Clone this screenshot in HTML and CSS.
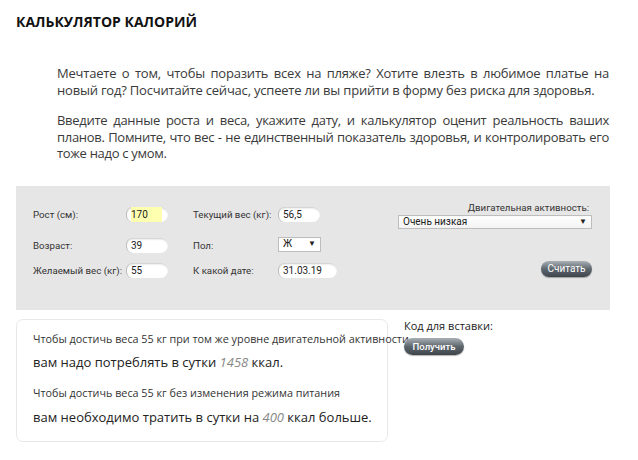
FILE: index.html
```html
<!DOCTYPE html>
<html lang="ru">
<head>
<meta charset="utf-8">
<link rel="stylesheet" href="styles.css">
</head>
<body>
<h1 class="title">КАЛЬКУЛЯТОР КАЛОРИЙ</h1>
<div class="intro">
  <p>Мечтаете о том, чтобы поразить всех на пляже? Хотите влезть в любимое платье на новый год? Посчитайте сейчас, успеете ли вы прийти в форму без риска для здоровья.</p>
  <p class="tight">Введите данные роста и веса, укажите дату, и калькулятор оценит реальность ваших планов. Помните, что вес - не единственный показатель здоровья, и контролировать его тоже надо с умом.</p>
</div>
<div class="panel">
  <div class="fields">
    <span class="lbl">Рост (см):</span>
    <span class="inp"><span class="hl">170</span></span>
    <span class="lbl">Текущий вес (кг):</span>
    <span class="inp">56,5</span>
    <span class="lbl">Возраст:</span>
    <span class="inp">39</span>
    <span class="lbl">Пол:</span>
    <span class="sel small"><span>Ж</span><span class="arr">▼</span></span>
    <span class="lbl">Желаемый вес (кг):</span>
    <span class="inp">55</span>
    <span class="lbl">К какой дате:</span>
    <span class="inp wide">31.03.19</span>
  </div>
  <div class="side">
    <div class="lbl side-lbl">Двигательная активность:</div>
    <span class="sel big"><span>Очень низкая</span><span class="arr">▼</span></span>
    <span class="btn calc">Считать</span>
  </div>
</div>
<div class="bottom">
  <div class="result">
    <div class="group">
      <p class="small-t">Чтобы достичь веса 55 кг при том же уровне двигательной активности</p>
      <p class="big-t">вам надо потреблять в сутки <em>1458</em> ккал.</p>
    </div>
    <div class="group">
      <p class="small-t">Чтобы достичь веса 55 кг без изменения режима питания</p>
      <p class="big-t">вам необходимо тратить в сутки на <em>400</em> ккал больше.</p>
    </div>
  </div>
  <div class="embed">
    <div class="embed-lbl">Код для вставки:</div>
    <span class="btn get">Получить</span>
  </div>
</div>
</body>
</html>
```
FILE: styles.css
```css
html, body { margin: 0; padding: 0; background: #fff; }
body {
  padding: 0 16px;
  font-family: "Open Sans", "DejaVu Sans", sans-serif;
  color: #333;
}
.title {
  margin: 0;
  padding-top: 12px;
  font-size: 14px;
  line-height: 20px;
  font-weight: 700;
  color: #111;
}
.intro {
  padding: 0 13px 0 41px;
  margin-top: 33px;
  font-size: 13px;
  letter-spacing: -0.2px;
  line-height: 16.5px;
  color: #3a3a3a;
  text-align: justify;
}
.intro p { margin: 0 0 14px; }
.intro p.tight { letter-spacing: -0.3px; }
.panel {
  margin-top: 24px;
  width: 594px;
  height: 124px;
  box-sizing: border-box;
  background: #e6e6e6;
  padding: 21px 18px 0 17px;
  display: flex;
  font-family: Roboto, "Liberation Sans", sans-serif;
}
.fields {
  display: grid;
  grid-template-columns: 93px 67px 85px auto;
  grid-template-rows: 31px 25px 15px;
  align-items: start;
}
.lbl { font-size: 9.7px; line-height: 15px; color: #333; }
.inp {
  display: block;
  width: 42px;
  height: 15px;
  box-sizing: border-box;
  padding: 0 0 0 4px;
  background: #fff;
  border-radius: 7px 8px 8px 7px;
  border-left: 1px solid #bbb;
  box-shadow: inset 0 2px 2px -1px #c8c8c8;
  font-size: 10px;
  line-height: 15px;
  color: #222;
}
.inp.wide { width: 59px; }
.hl { display: inline-block; background: #ffffb0; width: 31px; }
.sel {
  display: flex;
  justify-content: space-between;
  align-items: center;
  box-sizing: border-box;
  background: #fff;
  border: 1px solid #bdbdbd;
  box-shadow: inset 0 1px 0 #fafafa;
  font-size: 10px;
  line-height: 12px;
  color: #222;
  padding: 0 4px;
}
.sel .arr { font-size: 8px; color: #222; }
.sel.small { width: 43px; height: 15px; margin-top: -1px; }
.sel.big { width: 194px; height: 14px; background: linear-gradient(#fff, #f3f3f3); }
.side {
  margin-left: auto;
  margin-top: -6px;
  width: 194px;
  display: flex;
  flex-direction: column;
  align-items: flex-end;
}
.side-lbl { line-height: 14px; margin-right: 3px; }
.btn {
  display: inline-block;
  box-sizing: border-box;
  border-radius: 9px;
  background: linear-gradient(#a9b0b6, #5f676e 50%, #3d444a);
  color: #fff;
  text-align: center;
  font-family: Roboto, "Open Sans", sans-serif;
  box-shadow: 0 1px 1px rgba(0,0,0,0.3);
}
.calc {
  margin-top: 32px;
  width: 51px;
  height: 16px;
  line-height: 16px;
  font-size: 10px;
}
.bottom {
  display: flex;
  margin-top: 9px;
}
.result {
  width: 372px;
  height: 123px;
  box-sizing: border-box;
  border: 1px solid #e8e8e8;
  border-radius: 7px;
  padding: 11px 0 0 16px;
  white-space: nowrap;
  display: flex;
  flex-direction: column;
  gap: 14px;
}
.result p { margin: 0; }
.small-t { font-size: 10.8px; line-height: 16px; color: #333; }
.big-t { font-size: 13px; line-height: 18px; margin-top: 6px !important; color: #222; }
.group + .group .big-t { margin-top: 7px !important; }
.big-t em { color: #888; font-style: italic; }
.embed {
  margin-left: 16px;
  position: relative;
  z-index: 1;
}
.embed-lbl { font-size: 11px; line-height: 14px; color: #222; }
.get {
  margin-top: 4px;
  width: 60px;
  height: 17px;
  line-height: 17px;
  font-size: 9.5px;
  font-weight: 500;
}
```
